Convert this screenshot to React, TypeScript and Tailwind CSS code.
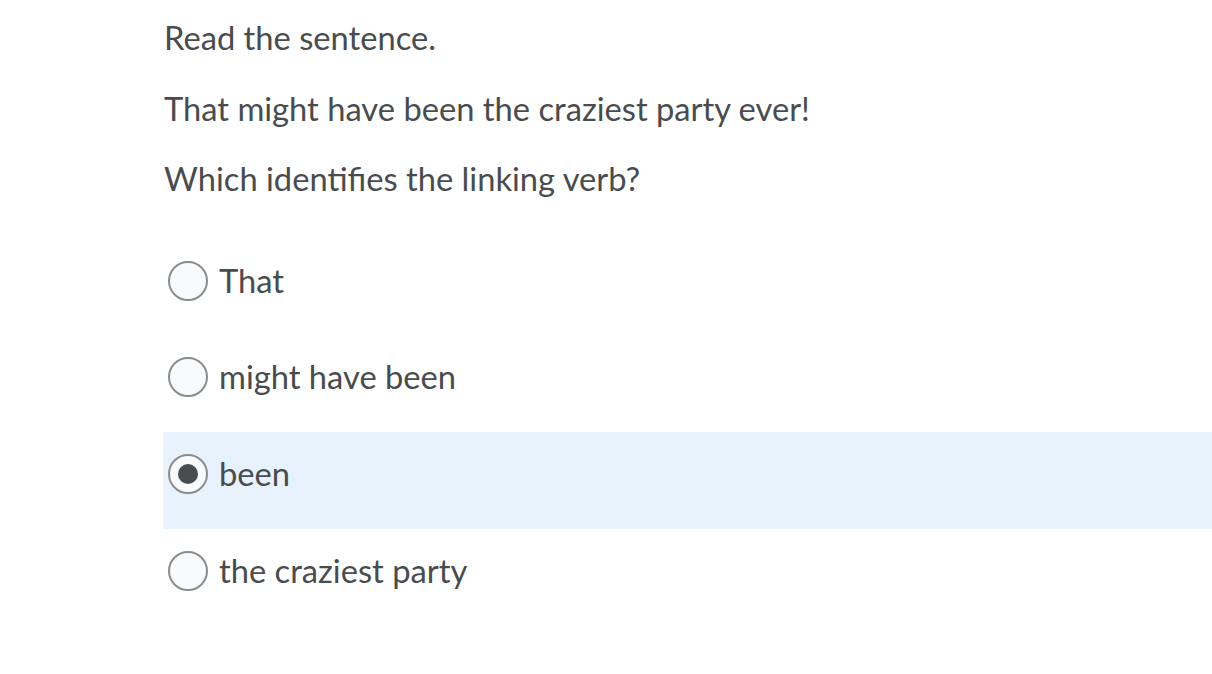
import { useState } from "react";

const options = ["That", "might have been", "been", "the craziest party"];

export default function App() {
  const [selected, setSelected] = useState(2);

  return (
    <div
      className="min-h-screen bg-white text-[#494c4e] pl-[163px]"
      style={{ fontFamily: "Lato, 'Noto Sans', sans-serif" }}
    >
      <div className="pl-px text-[32.7px] leading-[70.5px] pt-[3px]">
        <p>Read the sentence.</p>
        <p>That might have been the craziest party ever!</p>
        <p>Which identifies the linking verb?</p>
      </div>

      <div className="mt-[24px]">
        {options.map((opt, i) => {
          const active = i === selected;
          return (
            <label
              key={opt}
              onClick={() => setSelected(i)}
              className={`flex h-[96.7px] items-start pt-[22px] cursor-pointer ${
                active ? "bg-[#e8f2fc]" : ""
              }`}
            >
              <span className="ml-[5px] flex h-[40px] w-[40px] shrink-0 items-center justify-center rounded-full border-2 border-[#8a8d90] bg-[#f9fafb]">
                {active && (
                  <span className="h-[20px] w-[20px] rounded-full bg-[#494c4e]" />
                )}
              </span>
              <span className="ml-[11px] text-[32.7px] leading-[40px]">{opt}</span>
            </label>
          );
        })}
      </div>
    </div>
  );
}
